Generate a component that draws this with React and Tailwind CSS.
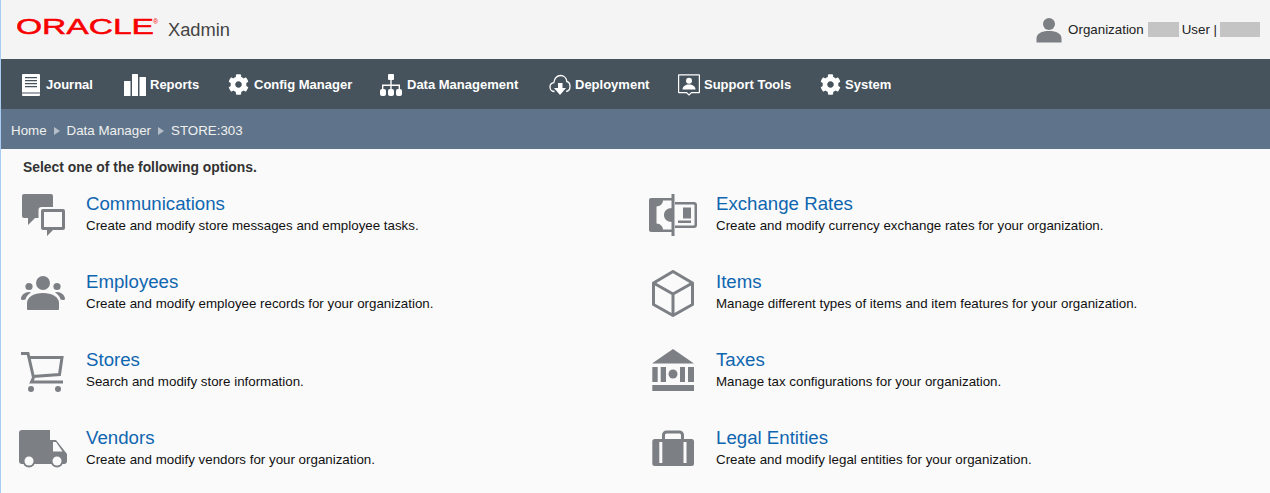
import React from 'react';
import { FaCog } from 'react-icons/fa';

const IconBox = ({ children }) => (
  <svg viewBox="0 0 48 48" className="w-12 h-12 shrink-0 mr-[19px] fill-[#7c7f84] stroke-none">{children}</svg>
);

const CommIcon = () => (
  <IconBox>
    <path d="M5 2h27a2 2 0 0 1 2 2v22H16l-7 7v-7H5a2 2 0 0 1-2-2V4a2 2 0 0 1 2-2z" />
    <rect x="19.500" y="15" width="27.500" height="25" rx="3" className="fill-[#fafafa]" />
    <path d="M24 17h20a2 2 0 0 1 2 2v17a2 2 0 0 1-2 2H34l-6 6v-6h-4a2 2 0 0 1-2-2V19a2 2 0 0 1 2-2zm1 3v15h18V20z" fillRule="evenodd" />
  </IconBox>
);

const EmployeesIcon = () => (
  <IconBox>
    <circle cx="24" cy="13" r="7" />
    <circle cx="10" cy="16.500" r="3.600" />
    <circle cx="38" cy="16.500" r="3.600" />
    <path d="M2 29c0-4 4-7 8-7l2 .5c-3 2-5 4-5.500 7L4 30c-1 0-2-.2-2-1zM46 29c0-4-4-7-8-7l-2 .5c3 2 5 4 5.500 7L44 30c1 0 2-.2 2-1z" />
    <path d="M8 39v-6c0-6 7-10 16-10s16 4 16 10v6a1 1 0 0 1-1 1H9a1 1 0 0 1-1-1z" />
  </IconBox>
);

const StoresIcon = () => (
  <IconBox>
    <path d="M2 5.500h7l5.500 24-2 4.500H44M10.500 9.500h32.500l-2.500 17-27 2" fill="none" className="stroke-[#7c7f84]" strokeWidth="3" />
    <circle cx="12" cy="41" r="3" />
    <circle cx="39" cy="41" r="3" />
  </IconBox>
);

const VendorsIcon = () => (
  <IconBox>
    <path d="M3 4h28v10h6l11 14v7a3 3 0 0 1-3 3H3a3 3 0 0 1-3-3V7a3 3 0 0 1 3-3z" />
    <path d="M34 16v9.500h9.500l-6.500-9.500z" className="fill-[#fafafa]" />
    <circle cx="10" cy="35" r="6.500" />
    <circle cx="10" cy="35" r="4.500" className="fill-[#fafafa]" />
    <circle cx="38" cy="35" r="6.500" />
    <circle cx="38" cy="35" r="4.500" className="fill-[#fafafa]" />
  </IconBox>
);

const ExchangeIcon = () => (
  <IconBox>
    <path d="M2 6h21v34H2a2 2 0 0 1-2-2V8a2 2 0 0 1 2-2z" />
    <path d="M14 8.500h9v29h-9c0-3-3-6-6.500-6v-17c3.500 0 6.500-3 6.500-6z" className="fill-[#fafafa]" />
    <path d="M23 16c-5 0-8 3-8 7s3 7 8 7z" />
    <rect x="22.500" y="2" width="3" height="42" />
    <path d="M26 10h19a3 3 0 0 1 3 3v20a3 3 0 0 1-3 3H26v-2.500h18.500a1 1 0 0 0 1-1v-19a1 1 0 0 0-1-1H26z" />
    <rect x="34" y="15.500" width="8" height="11" />
    <rect x="29" y="28.500" width="13" height="2.500" />
  </IconBox>
);

const ItemsIcon = () => (
  <IconBox>
    <path d="M24 1.500 43.500 13v21.500L24 45.500 4.500 34.500V13zM4.500 13 24 24l19.500-11M24 24v21.500" fill="none" className="stroke-[#7c7f84]" strokeWidth="3" strokeLinejoin="round" />
  </IconBox>
);

const TaxesIcon = () => (
  <IconBox>
    <path d="M24 1 45 15.500H3z" />
    <rect x="3.300" y="19" width="5.400" height="15" />
    <rect x="11.700" y="19" width="5.300" height="15" />
    <circle cx="24" cy="26" r="4.500" />
    <rect x="31" y="19" width="5" height="15" />
    <rect x="39" y="19" width="6" height="15" />
    <rect x="3.300" y="37" width="41.700" height="6" />
  </IconBox>
);

const LegalIcon = () => (
  <IconBox>
    <path d="M14.500 13V9a3 3 0 0 1 3-3h13a3 3 0 0 1 3 3v4" fill="none" className="stroke-[#7c7f84]" strokeWidth="3" />
    <rect x="3.300" y="13" width="41.700" height="27" rx="2.500" />
    <rect x="10.300" y="16" width="3" height="21" className="fill-[#fafafa]" />
    <rect x="34.500" y="16" width="3" height="21" className="fill-[#fafafa]" />
  </IconBox>
);

const JournalIcon = () => (
  <svg viewBox="0 0 18 22" className="w-[18px] h-[22px] fill-white">
    <path fillRule="evenodd" d="M1 0h16a1 1 0 0 1 1 1v20a1 1 0 0 1-1 1H1a1 1 0 0 1-1-1V1a1 1 0 0 1 1-1zM3 3v1.200h12V3zm0 3v1.200h12V6zm0 3v1.200h12V9zm0 3v1.200h12V12zM0 18.500v1h18v-1z" />
  </svg>
);

const ReportsIcon = () => (
  <svg viewBox="0 0 22 22" className="w-[22px] h-[22px] fill-white">
    <rect x="0" y="7" width="6.500" height="15" rx="0.500" />
    <rect x="8" y="0" width="6" height="22" rx="0.500" />
    <rect x="15.500" y="3" width="6.500" height="19" rx="0.500" />
  </svg>
);

const TreeIcon = () => (
  <svg viewBox="0 0 22 22" className="w-[22px] h-[22px] fill-white">
    <rect x="8" y="0" width="6" height="6" rx="1" />
    <path d="M10.300 6h1.400v4.500H20V15h-1.400v-3.100h-6.900V15h-1.400v-3.100H3.400V15H2v-4.500h8.300z" />
    <rect x="0" y="15" width="6" height="7" rx="2" />
    <rect x="8" y="15" width="6" height="7" rx="2" />
    <rect x="16" y="15" width="6" height="7" rx="2" />
  </svg>
);

const CloudIcon = () => (
  <svg viewBox="0 0 22 22" className="w-[22px] h-[22px]">
    <path d="M5.500 17.500C3 17.500 1 15.500 1 13c0-2.300 1.700-4 3.800-4.300C5.200 4.500 8 1.500 11.500 1.500c3.400 0 6 2.600 6.300 6 2 .4 3.200 2.500 3.200 5 0 2.600-1.500 4.500-3.800 5" fill="none" stroke="white" strokeWidth="1.300" />
    <path d="M9 9h4.500v5H17l-6 7-6-7h4z" fill="white" />
  </svg>
);

const SupportIcon = () => (
  <svg viewBox="0 0 22 22" className="w-[22px] h-[22px]">
    <path d="M1 .8h20a.4.4 0 0 1 .4.400v17a.4.4 0 0 1-.4.400h-7.500L11 21l-2.500-2.400H1a.4.4 0 0 1-.4-.4v-17A.4.4 0 0 1 1 .8z" fill="none" stroke="white" strokeWidth="1.200" />
    <circle cx="11" cy="6.800" r="3" fill="white" />
    <path d="M4.500 15.500c0-3 3-5 6.500-5s6.500 2 6.500 5z" fill="white" />
  </svg>
);

const navItems = [
  { label: 'Journal', icon: <JournalIcon />, cls: 'gap-[6px] w-[102px]' },
  { label: 'Reports', icon: <ReportsIcon />, cls: 'gap-1 w-[104px]' },
  { label: 'Config Manager', icon: <FaCog className="w-[21px] h-[21px] text-white" />, cls: 'gap-[5px] w-[152px]' },
  { label: 'Data Management', icon: <TreeIcon />, cls: 'gap-[5px] w-[169px]' },
  { label: 'Deployment', icon: <CloudIcon />, cls: 'gap-1 w-[129px]' },
  { label: 'Support Tools', icon: <SupportIcon />, cls: 'gap-1 w-[142px]' },
  { label: 'System', icon: <FaCog className="w-[21px] h-[21px] text-white" />, cls: 'gap-1' },
];

const rows = [
  [
    { title: 'Communications', text: 'Create and modify store messages and employee tasks.', icon: <CommIcon /> },
    { title: 'Exchange Rates', text: 'Create and modify currency exchange rates for your organization.', icon: <ExchangeIcon /> },
  ],
  [
    { title: 'Employees', text: 'Create and modify employee records for your organization.', icon: <EmployeesIcon /> },
    { title: 'Items', text: 'Manage different types of items and item features for your organization.', icon: <ItemsIcon /> },
  ],
  [
    { title: 'Stores', text: 'Search and modify store information.', icon: <StoresIcon /> },
    { title: 'Taxes', text: 'Manage tax configurations for your organization.', icon: <TaxesIcon /> },
  ],
  [
    { title: 'Vendors', text: 'Create and modify vendors for your organization.', icon: <VendorsIcon /> },
    { title: 'Legal Entities', text: 'Create and modify legal entities for your organization.', icon: <LegalIcon /> },
  ],
];

const Option = ({ option }) => (
  <div className="flex w-[630px] h-[78px] shrink-0">
    {option.icon}
    <div className="pt-[1px]">
      <a href="#" className="block text-[18.67px] leading-[22px] text-[#0f66b0]">{option.title}</a>
      <p className="text-[13.33px] leading-[22px] text-[#111]">{option.text}</p>
    </div>
  </div>
);

const App = () => {
  return (
    <div className="h-[493px] overflow-hidden border-l border-[#a9cdf2] bg-[#fafafa] font-['Liberation_Sans',Arial,sans-serif]">
      <header className="h-[59px] bg-[#f4f4f4] flex items-center justify-between pl-4 pr-[10px]">
        <div className="flex items-center">
          <svg viewBox="0 0 142 24" className="w-[142px] h-6 mt-[-7px]">
            <text x="-1" y="20" textLength="138" lengthAdjust="spacingAndGlyphs" fontFamily="Liberation Sans" fontSize="22" fill="#f80000" stroke="#f80000" strokeWidth="0.500">ORACLE</text>
            <text x="136" y="10" fontFamily="Liberation Sans" fontSize="7" fill="#f80000">®</text>
          </svg>
          <span className="text-[18.3px] text-[#444] ml-[9px] mt-[1px]">Xadmin</span>
        </div>
        <div className="flex items-center text-[13.33px] text-[#222]">
          <svg viewBox="0 0 26 26" className="w-[26px] h-[26px] mr-[6px] fill-[#7c7f84]">
            <circle cx="13" cy="7" r="6" />
            <path d="M0.500 25.500v-4c0-5 5-7.500 12.500-7.500s12.500 2.500 12.500 7.500v4z" />
          </svg>
          <span>Organization</span>
          <span className="w-[31px] h-[15px] bg-[#c4c4c4] ml-1 mr-[3px]" />
          <span>User |</span>
          <span className="w-10 h-[15px] bg-[#c4c4c4] ml-[3px]" />
        </div>
      </header>

      <nav className="h-[50px] bg-[#46535c] flex items-center pl-[21px] pt-[1px] text-[13px] font-bold text-white">
        {navItems.map((item) => (
          <a key={item.label} href="#" className={`flex items-center ${item.cls}`}>
            {item.icon}
            <span>{item.label}</span>
          </a>
        ))}
      </nav>

      <div className="h-10 bg-[#5f748a] flex items-center pl-[10px] pt-[3px] text-[13.33px] text-[#f0f0f0]">
        <span>Home</span>
        <span className="mx-[7px] w-0 h-0 border-y-[4px] border-y-transparent border-l-[6px] border-l-[#b5bfca]" />
        <span>Data Manager</span>
        <span className="mx-[7px] w-0 h-0 border-y-[4px] border-y-transparent border-l-[6px] border-l-[#b5bfca]" />
        <span>STORE:303</span>
      </div>

      <main className="pl-[18px]">
        <p className="pl-1 pt-[10px] h-[43px] text-[13.9px] leading-[17px] font-bold text-[#333]">Select one of the following options.</p>
        {rows.map((row) => (
          <div key={row[0].title} className="flex">
            {row.map((option) => (
              <Option key={option.title} option={option} />
            ))}
          </div>
        ))}
      </main>
    </div>
  );
};

export default App;
